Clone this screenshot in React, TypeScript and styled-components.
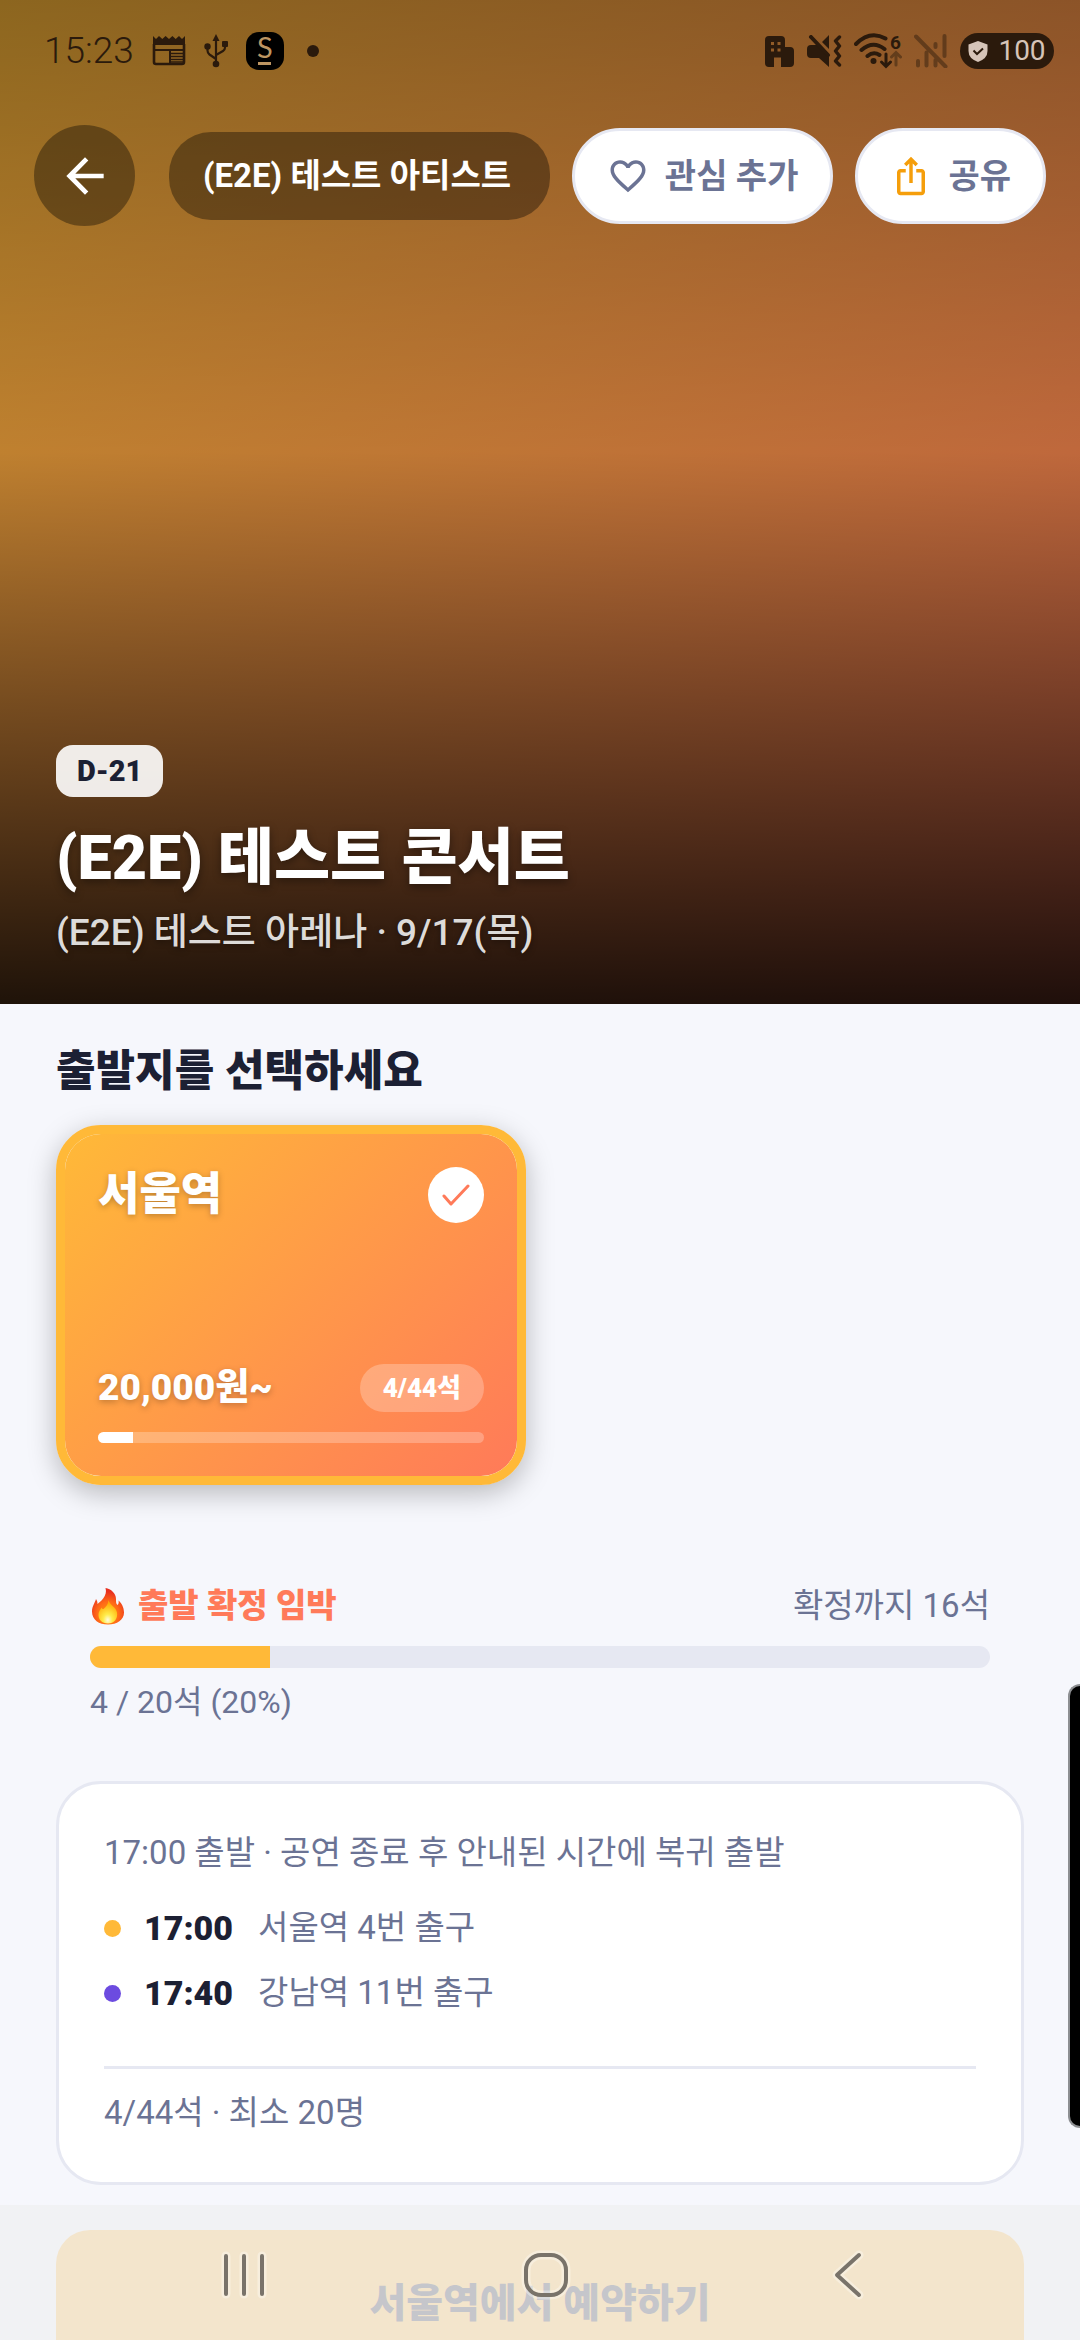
import React from "react";
import styled, { createGlobalStyle } from "styled-components";

const color = {
  ink: "#1c2033",
  slate: "#6b7394",
  line: "#e6e8f2",
  page: "#f6f7fc",
  amber: "#ffb938",
  coral: "#ff7a59",
  status: "#2b1a0c",
};

const GlobalStyle = createGlobalStyle`
  *, *::before, *::after { box-sizing: border-box; }
  body { margin: 0; background: ${color.page}; }
  button { font: inherit; color: inherit; border: 0; padding: 0; cursor: pointer; }
  h1, h2, p, ul { margin: 0; padding: 0; }
`;

const Screen = styled.div`
  height: 100vh;
  overflow-x: hidden;
  overflow-y: auto;
  scrollbar-width: none;
  background: ${color.page};
  color: ${color.ink};
  font-family: Roboto, "Noto Sans CJK KR", sans-serif;
  font-size: 34px;
  line-height: 48px;
`;

/* ---------- status bar ---------- */

const StatusBar = styled.div`
  display: flex;
  align-items: center;
  justify-content: space-between;
  height: 102px;
  padding: 0 26px 0 44px;
  color: ${color.status};
`;

const StatusGroup = styled.div<{ $gap: number }>`
  display: flex;
  align-items: center;
  gap: ${(p) => p.$gap}px;
`;

const Clock = styled.time`
  font-size: 37px;
  font-weight: 300;
`;

const AppBadge = styled.span`
  display: flex;
  flex-direction: column;
  align-items: center;
  width: 38px;
  height: 38px;
  border-radius: 13px;
  background: #000;
  color: #bd9562;
  font-family: Lato, sans-serif;
  font-size: 29px;
  line-height: 30px;

  &::after {
    content: "";
    width: 13px;
    height: 3px;
    background: currentColor;
  }
`;

const MoreDot = styled.span`
  width: 12px;
  height: 12px;
  margin-left: 5px;
  border-radius: 50%;
  background: currentColor;
`;

const BatteryPill = styled.span`
  display: flex;
  align-items: center;
  justify-content: center;
  gap: 10px;
  width: 94px;
  height: 36px;
  border-radius: 18px;
  background: ${color.status};
  color: #d6c4b8;
  font-size: 28px;
  line-height: 36px;
`;

/* ---------- hero ---------- */

const Hero = styled.header`
  display: flex;
  flex-direction: column;
  min-height: 1004px;
  background:
    linear-gradient(180deg, rgba(0, 0, 0, 0.45) 0%, rgba(0, 0, 0, 0.25) 45%, rgba(0, 0, 0, 0.88) 100%),
    linear-gradient(135deg, ${color.amber} 0%, ${color.coral} 100%);
`;

const TopBar = styled.div`
  display: flex;
  align-items: center;
  padding: 23px 34px;
  gap: 22px;
`;

const BackButton = styled.button`
  display: flex;
  align-items: center;
  justify-content: center;
  width: 101px;
  height: 101px;
  margin-right: 12px;
  border-radius: 50%;
  background: rgba(0, 0, 0, 0.36);
  color: #fff;
`;

const ArtistChip = styled.div`
  flex: 1;
  min-width: 0;
  padding: 20px 34px;
  border-radius: 42px;
  background: rgba(0, 0, 0, 0.36);
  color: #fff;
  font-size: 33px;
  font-weight: 700;
  white-space: nowrap;
  overflow: hidden;
`;

const PillButton = styled.button`
  && {
    padding: 0 32px;
    border: 3px solid ${color.line};
  }
  display: flex;
  align-items: center;
  gap: 16px;
  height: 96px;
  border-radius: 48px;
  background: #fff;
  color: ${color.slate};
  font-size: 34px;
  font-weight: 700;
  white-space: nowrap;
`;

const HeroText = styled.div`
  display: flex;
  flex-direction: column;
  align-items: flex-start;
  margin-top: auto;
  padding: 0 56px 47px;
`;

const DDay = styled.span`
  padding: 0 21px;
  margin-bottom: 23px;
  border-radius: 17px;
  background: rgba(255, 255, 255, 0.9);
  font-size: 29px;
  font-weight: 900;
  line-height: 52px;
`;

const Title = styled.h1`
  color: #fff;
  font-size: 61px;
  font-weight: 900;
  line-height: 76px;
  text-shadow: 0 3px 8px rgba(0, 0, 0, 0.4);
`;

const Venue = styled.p`
  margin-top: 13px;
  color: #dddbd9;
  font-size: 37px;
  font-weight: 500;
  text-shadow: 0 2px 6px rgba(0, 0, 0, 0.4);
`;

/* ---------- body ---------- */

const Content = styled.main`
  padding: 39px 56px 45px;
`;

const SectionTitle = styled.h2`
  margin-bottom: 26px;
  font-size: 43px;
  font-weight: 900;
  line-height: 56px;
`;

const StopGrid = styled.div`
  display: grid;
  grid-template-columns: 1fr 1fr;
  gap: 28px;
`;

const StopCard = styled.button`
  display: flex;
  flex-direction: column;
  justify-content: space-between;
  height: 360px;
  && { padding: 33px; border: 9px solid ${color.amber}; }
  border-radius: 45px;
  background: linear-gradient(135deg, ${color.amber}, ${color.coral}) padding-box;
  box-shadow: 0 8px 28px rgba(0, 0, 0, 0.26);
  color: #fff;
  text-align: left;
`;

const Spread = styled.div`
  display: flex;
  align-items: center;
  justify-content: space-between;
`;

const StopName = styled.span`
  font-size: 45px;
  font-weight: 900;
  line-height: 56px;
  text-shadow: 0 2px 6px rgba(0, 0, 0, 0.25);
`;

const CheckCircle = styled.span`
  display: flex;
  align-items: center;
  justify-content: center;
  width: 56px;
  height: 56px;
  border-radius: 50%;
  background: #fff;
  color: ${color.coral};
`;

const Price = styled.span`
  font-size: 37px;
  font-weight: 900;
  text-shadow: 0 2px 6px rgba(0, 0, 0, 0.25);
`;

const SeatPill = styled.span`
  padding: 0 23px;
  border-radius: 24px;
  background: rgba(255, 255, 255, 0.25);
  font-size: 26px;
  font-weight: 900;
`;

const Track = styled.div<{ $height: number; $color: string }>`
  overflow: hidden;
  height: ${(p) => p.$height}px;
  border-radius: ${(p) => p.$height}px;
  background: ${(p) => p.$color};
`;

const Fill = styled.div<{ $color: string }>`
  height: 100%;
  background: ${(p) => p.$color};
`;

const StopFooter = styled.div`
  display: flex;
  flex-direction: column;
  gap: 20px;
`;

const Confirm = styled.section`
  display: flex;
  flex-direction: column;
  padding: 99px 34px 59px;
  color: ${color.slate};
  font-size: 33px;
  line-height: 44px;
`;

const Hot = styled.span`
  display: flex;
  align-items: center;
  gap: 12px;
  color: ${color.coral};
  font-weight: 900;
`;

const ConfirmTrack = styled.div`
  margin: 18px 0 14px;
`;

const Caption = styled.p`
  font-size: 32px;
  line-height: 40px;
`;

const InfoCard = styled.section`
  padding: 45px;
  border: 3px solid ${color.line};
  border-radius: 45px;
  background: #fff;
  color: ${color.slate};
  font-size: 33px;
`;

const RouteList = styled.ul`
  display: flex;
  flex-direction: column;
  gap: 17px;
  margin: 27px 0 49px;
  list-style: none;
`;

const RouteStop = styled.li<{ $dot: string }>`
  display: flex;
  align-items: center;

  &::before {
    content: "";
    width: 17px;
    height: 17px;
    margin-right: 23px;
    border-radius: 50%;
    background: ${(p) => p.$dot};
  }
`;

const RouteTime = styled.time`
  margin-right: 25px;
  color: ${color.ink};
  font-size: 34px;
  font-weight: 900;
`;

const Seats = styled.p`
  padding-top: 20px;
  border-top: 3px solid ${color.line};
`;

const ReserveButton = styled.button`
  width: 100%;
  height: 148px;
  margin-top: 45px;
  border-radius: 34px;
  background: ${color.amber};
  font-size: 40px;
  font-weight: 900;
`;

/* ---------- system overlays ---------- */

const EdgeHandle = styled.div`
  position: fixed;
  top: 1684px;
  right: 0;
  width: 12px;
  height: 444px;
  border: 2px solid #8d8f92;
  border-right: 0;
  border-radius: 12px 0 0 12px;
  background: #000;
`;

const NavBar = styled.nav`
  position: fixed;
  right: 0;
  bottom: 0;
  left: 0;
  display: grid;
  grid-template-columns: repeat(3, 1fr);
  height: 135px;
  padding: 4px 80px 0 93px;
  background: rgba(240, 240, 241, 0.8);
`;

const NavButton = styled.button`
  display: flex;
  align-items: center;
  justify-content: center;
  background: none;
`;

/* ---------- icons ---------- */

const Glyph = ({ d, size, fill = "currentColor" }: { d: string; size: number; fill?: string }) => (
  <svg width={size} height={size} viewBox="0 0 24 24" fill={fill} aria-hidden="true">
    <path d={d} />
  </svg>
);

const BACK = "M20 11H7.83l5.59-5.59L12 4l-8 8 8 8 1.41-1.41L7.83 13H20v-2z";
const HEART =
  "M16.5 3c-1.74 0-3.41.81-4.5 2.09C10.91 3.81 9.24 3 7.5 3 4.42 3 2 5.42 2 8.5c0 3.78 3.4 6.86 8.55 11.54L12 21.35l1.45-1.32C18.6 15.36 22 12.28 22 8.5 22 5.42 19.58 3 16.5 3zm-4.4 15.55l-.1.1-.1-.1C7.14 14.24 4 11.39 4 8.5 4 6.5 5.5 5 7.5 5c1.54 0 3.04.99 3.57 2.36h1.87C13.46 5.99 14.96 5 16.5 5c2 0 3.5 1.5 3.5 3.5 0 2.89-3.14 5.74-7.9 10.05z";
const SHARE =
  "M16 5l-1.42 1.42-1.59-1.59V16h-1.98V4.83L9.42 6.42 8 5l4-4 4 4zm4 5v11c0 1.1-.9 2-2 2H6c-1.11 0-2-.9-2-2V10c0-1.11.89-2 2-2h3v2H6v11h12V10h-3V8h3c1.1 0 2 .89 2 2z";

const NewsIcon = () => (
  <svg width="34" height="30" viewBox="0 0 34 30" fill="none" stroke="currentColor" aria-hidden="true">
    <path d="M1 0l3 3 3-3 3.300 3 3.300-3 3.400 3 3.400-3 3.300 3 3.300-3 3 3 3-3v9H1z" fill="currentColor" stroke="none" />
    <path d="M2 8v18a2 2 0 0 0 2 2h26a2 2 0 0 0 2-2V8" strokeWidth="2.600" />
    <path d="M2 14h30M18 14v14" strokeWidth="2" />
    <path d="M18 17.500h14M18 20.500h14M18 23.500h14M18 26h14" strokeWidth="1.300" />
  </svg>
);

const UsbIcon = () => (
  <svg width="24" height="34" viewBox="0 0 24 34" fill="currentColor" aria-hidden="true">
    <path d="M12 5v24M12 25L5.500 20.500Q3.500 19 3.500 16.500V13M12 21l7-4q2-1.200 2-3.500V10" fill="none" stroke="currentColor" strokeWidth="2.200" />
    <path d="M12 0l3.500 7h-7z" />
    <circle cx="12" cy="30" r="3.300" />
    <circle cx="3.500" cy="12.500" r="3.200" />
    <rect x="18" y="7" width="6" height="6" rx="1" />
  </svg>
);

const BuildingIcon = () => (
  <svg width="30" height="31" viewBox="0 0 30 31" aria-hidden="true">
    <path
      fill="currentColor"
      fillRule="evenodd"
      d="M4 0h12a4 4 0 0 1 4 4v7h5a4 4 0 0 1 4 4v12a4 4 0 0 1-4 4h-9V21.500H9V31H4a4 4 0 0 1-4-4V4a4 4 0 0 1 4-4zM6 6v3h3V6zM12.500 6v3h3V6zM6 12.500v3h3v-3zM12.500 12.500v3h3v-3z"
    />
  </svg>
);

const MuteIcon = () => (
  <svg width="35" height="32" viewBox="0 0 35 32" aria-hidden="true">
    <path d="M4 10h6l12 12v10l-10-9H4q-4 0-4-4v-5q0-4 4-4zM22 0v14l-7-7z" fill="currentColor" />
    <path d="M4 2l17 18" stroke="currentColor" strokeWidth="4" strokeLinecap="round" />
    <path d="M32.500 2l-4 4 4 5-4 5 4 5-4 5 4 4" fill="none" stroke="currentColor" strokeWidth="3.400" strokeLinecap="round" strokeLinejoin="round" />
  </svg>
);

const WifiText = styled.text`
  font: 700 19px Roboto, sans-serif;
`;

const WifiIcon = () => (
  <svg width="48" height="46" viewBox="0 -5 48 46" fill="none" stroke="currentColor" strokeLinecap="round" aria-hidden="true">
    <path d="M2 11Q16-3 31.500 5.500M7.500 17Q19 7 30.500 16M13.500 23Q19.500 18 25.500 22" strokeWidth="4" />
    <circle cx="19.500" cy="28" r="3" fill="currentColor" stroke="none" />
    <path d="M32 21v12M27.500 29l4.500 4.500 4.500-4.500" strokeWidth="3" />
    <path d="M42 32V20M37.500 24l4.500-4.500 4.500 4.500" strokeWidth="3" opacity="0.450" />
    <WifiText x="36" y="16" fill="currentColor" stroke="none">
      6
    </WifiText>
  </svg>
);

const NoSignalIcon = () => (
  <svg width="34" height="34" viewBox="0 0 34 34" fill="none" stroke="currentColor" strokeWidth="4" strokeLinecap="round" opacity="0.450" aria-hidden="true">
    <path d="M4 27v4.500M12.500 18.500v13M21.500 26v5.500M21.500 10v3M30.500 2v20M2 2.500l29.500 30" />
  </svg>
);

const ShieldIcon = () => (
  <svg width="20" height="21" viewBox="0 0 20 21" aria-hidden="true">
    <path d="M10 0l9.500 3.500V10q0 7.500-9.500 11Q.5 17.500.5 10V3.500z" fill="currentColor" />
    <path d="M5.500 9.500l3.500 3.500 6-5.500" fill="none" stroke={color.status} strokeWidth="2" />
  </svg>
);

const CheckIcon = () => (
  <svg width="28" height="22" viewBox="0 0 28 22" fill="none" stroke="currentColor" strokeWidth="3" strokeLinecap="round" strokeLinejoin="round" aria-hidden="true">
    <path d="M2 12l7 8L26 2" />
  </svg>
);

const FlameIcon = () => (
  <svg width="36" height="38" viewBox="0 0 36 38" aria-hidden="true">
    <defs>
      <radialGradient id="flameOuter" cx="0.500" cy="0.720" r="0.620">
        <stop offset="0" stopColor="#ff9d0a" />
        <stop offset="0.550" stopColor="#ff6a17" />
        <stop offset="1" stopColor="#e8301f" />
      </radialGradient>
      <radialGradient id="flameInner" cx="0.500" cy="0.850" r="0.700">
        <stop offset="0" stopColor="#fffbe0" />
        <stop offset="0.350" stopColor="#ffec4a" />
        <stop offset="1" stopColor="#ffad08" />
      </radialGradient>
    </defs>
    <path
      fill="url(#flameOuter)"
      d="M15.500 1C21 2 26 6 26 12c0 3 0 5 1.500 6 1-.5 1.500-2.500 1-4.500 3 2.500 5.500 7 5.500 12C34 33 27 37.500 18 37.500S2 33 2 24.500C2 19 5 16 6 12c1 1.500 1.500 3 1.500 5C10 15 18 9 15.500 1z"
    />
    <path
      fill="url(#flameInner)"
      d="M18.500 13c.5 4.500 7.500 7 8.500 12.500C28 32 24 36.500 18 36.500S8 32.500 8.500 27c.3-3 2-4.500 3-6.500.5 1 1 1.500 2 1.500 2.500-2 5-5 5-9z"
    />
  </svg>
);

const NavShape = ({ children }: { children: React.ReactNode }) => (
  <svg width="56" height="56" viewBox="0 0 56 56" fill="none" strokeLinecap="round" strokeLinejoin="round" aria-hidden="true">
    <g stroke="#fff" strokeOpacity="0.350" strokeWidth="9">{children}</g>
    <g stroke="#79736a" strokeWidth="4">{children}</g>
  </svg>
);

/* ---------- data ---------- */

const route = [
  { time: "17:00", place: "서울역 4번 출구", dot: color.amber },
  { time: "17:40", place: "강남역 11번 출구", dot: "#6c4be0" },
];

const seats = { taken: 4, total: 44, minimum: 20 };

function Meter(props: { label: string; value: number; max: number; height: number; track: string; fill: string }) {
  return (
    <Track
      role="progressbar"
      aria-label={props.label}
      aria-valuenow={props.value}
      aria-valuemax={props.max}
      $height={props.height}
      $color={props.track}
    >
      <Fill $color={props.fill} style={{ width: `${(props.value / props.max) * 100}%` }} />
    </Track>
  );
}

export default function App() {
  return (
    <Screen>
      <GlobalStyle />
      <Hero>
        <StatusBar>
          <StatusGroup $gap={18}>
            <Clock>15:23</Clock>
            <NewsIcon />
            <UsbIcon />
            <AppBadge>S</AppBadge>
            <MoreDot />
          </StatusGroup>
          <StatusGroup $gap={12}>
            <BuildingIcon />
            <MuteIcon />
            <WifiIcon />
            <NoSignalIcon />
            <BatteryPill>
              <ShieldIcon />
              100
            </BatteryPill>
          </StatusGroup>
        </StatusBar>

        <TopBar>
          <BackButton type="button" aria-label="뒤로">
            <Glyph d={BACK} size={56} />
          </BackButton>
          <ArtistChip>(E2E) 테스트 아티스트</ArtistChip>
          <PillButton type="button">
            <Glyph d={HEART} size={42} />
            관심 추가
          </PillButton>
          <PillButton type="button">
            <Glyph d={SHARE} size={42} fill="#f59e0b" />
            공유
          </PillButton>
        </TopBar>

        <HeroText>
          <DDay>D-21</DDay>
          <Title>(E2E) 테스트 콘서트</Title>
          <Venue>(E2E) 테스트 아레나 · 9/17(목)</Venue>
        </HeroText>
      </Hero>

      <Content>
        <SectionTitle>출발지를 선택하세요</SectionTitle>
        <StopGrid>
          <StopCard type="button" aria-pressed="true">
            <Spread>
              <StopName>서울역</StopName>
              <CheckCircle>
                <CheckIcon />
              </CheckCircle>
            </Spread>
            <StopFooter>
              <Spread>
                <Price>20,000원~</Price>
                <SeatPill>
                  {seats.taken}/{seats.total}석
                </SeatPill>
              </Spread>
              <Meter
                label="예약 좌석"
                value={seats.taken}
                max={seats.total}
                height={11}
                track="rgba(255, 255, 255, 0.25)"
                fill="#fff"
              />
            </StopFooter>
          </StopCard>
        </StopGrid>

        <Confirm>
          <Spread>
            <Hot>
              <FlameIcon />
              출발 확정 임박
            </Hot>
            <span>확정까지 {seats.minimum - seats.taken}석</span>
          </Spread>
          <ConfirmTrack>
            <Meter
              label="출발 확정"
              value={seats.taken}
              max={seats.minimum}
              height={22}
              track={color.line}
              fill={color.amber}
            />
          </ConfirmTrack>
          <Caption>
            {seats.taken} / {seats.minimum}석 (20%)
          </Caption>
        </Confirm>

        <InfoCard>
          <p>17:00 출발 · 공연 종료 후 안내된 시간에 복귀 출발</p>
          <RouteList>
            {route.map((stop) => (
              <RouteStop key={stop.time} $dot={stop.dot}>
                <RouteTime>{stop.time}</RouteTime>
                {stop.place}
              </RouteStop>
            ))}
          </RouteList>
          <Seats>
            {seats.taken}/{seats.total}석 · 최소 {seats.minimum}명
          </Seats>
        </InfoCard>

        <ReserveButton type="button">서울역에서 예약하기</ReserveButton>
      </Content>

      <EdgeHandle />

      <NavBar>
        <NavButton type="button" aria-label="최근 앱">
          <NavShape>
            <path d="M10 9v38M28 9v38M46 9v38" />
          </NavShape>
        </NavButton>
        <NavButton type="button" aria-label="홈">
          <NavShape>
            <rect x="8" y="8" width="40" height="40" rx="15" />
          </NavShape>
        </NavButton>
        <NavButton type="button" aria-label="뒤로 가기">
          <NavShape>
            <path d="M38 8L16 28l22 20" />
          </NavShape>
        </NavButton>
      </NavBar>
    </Screen>
  );
}
